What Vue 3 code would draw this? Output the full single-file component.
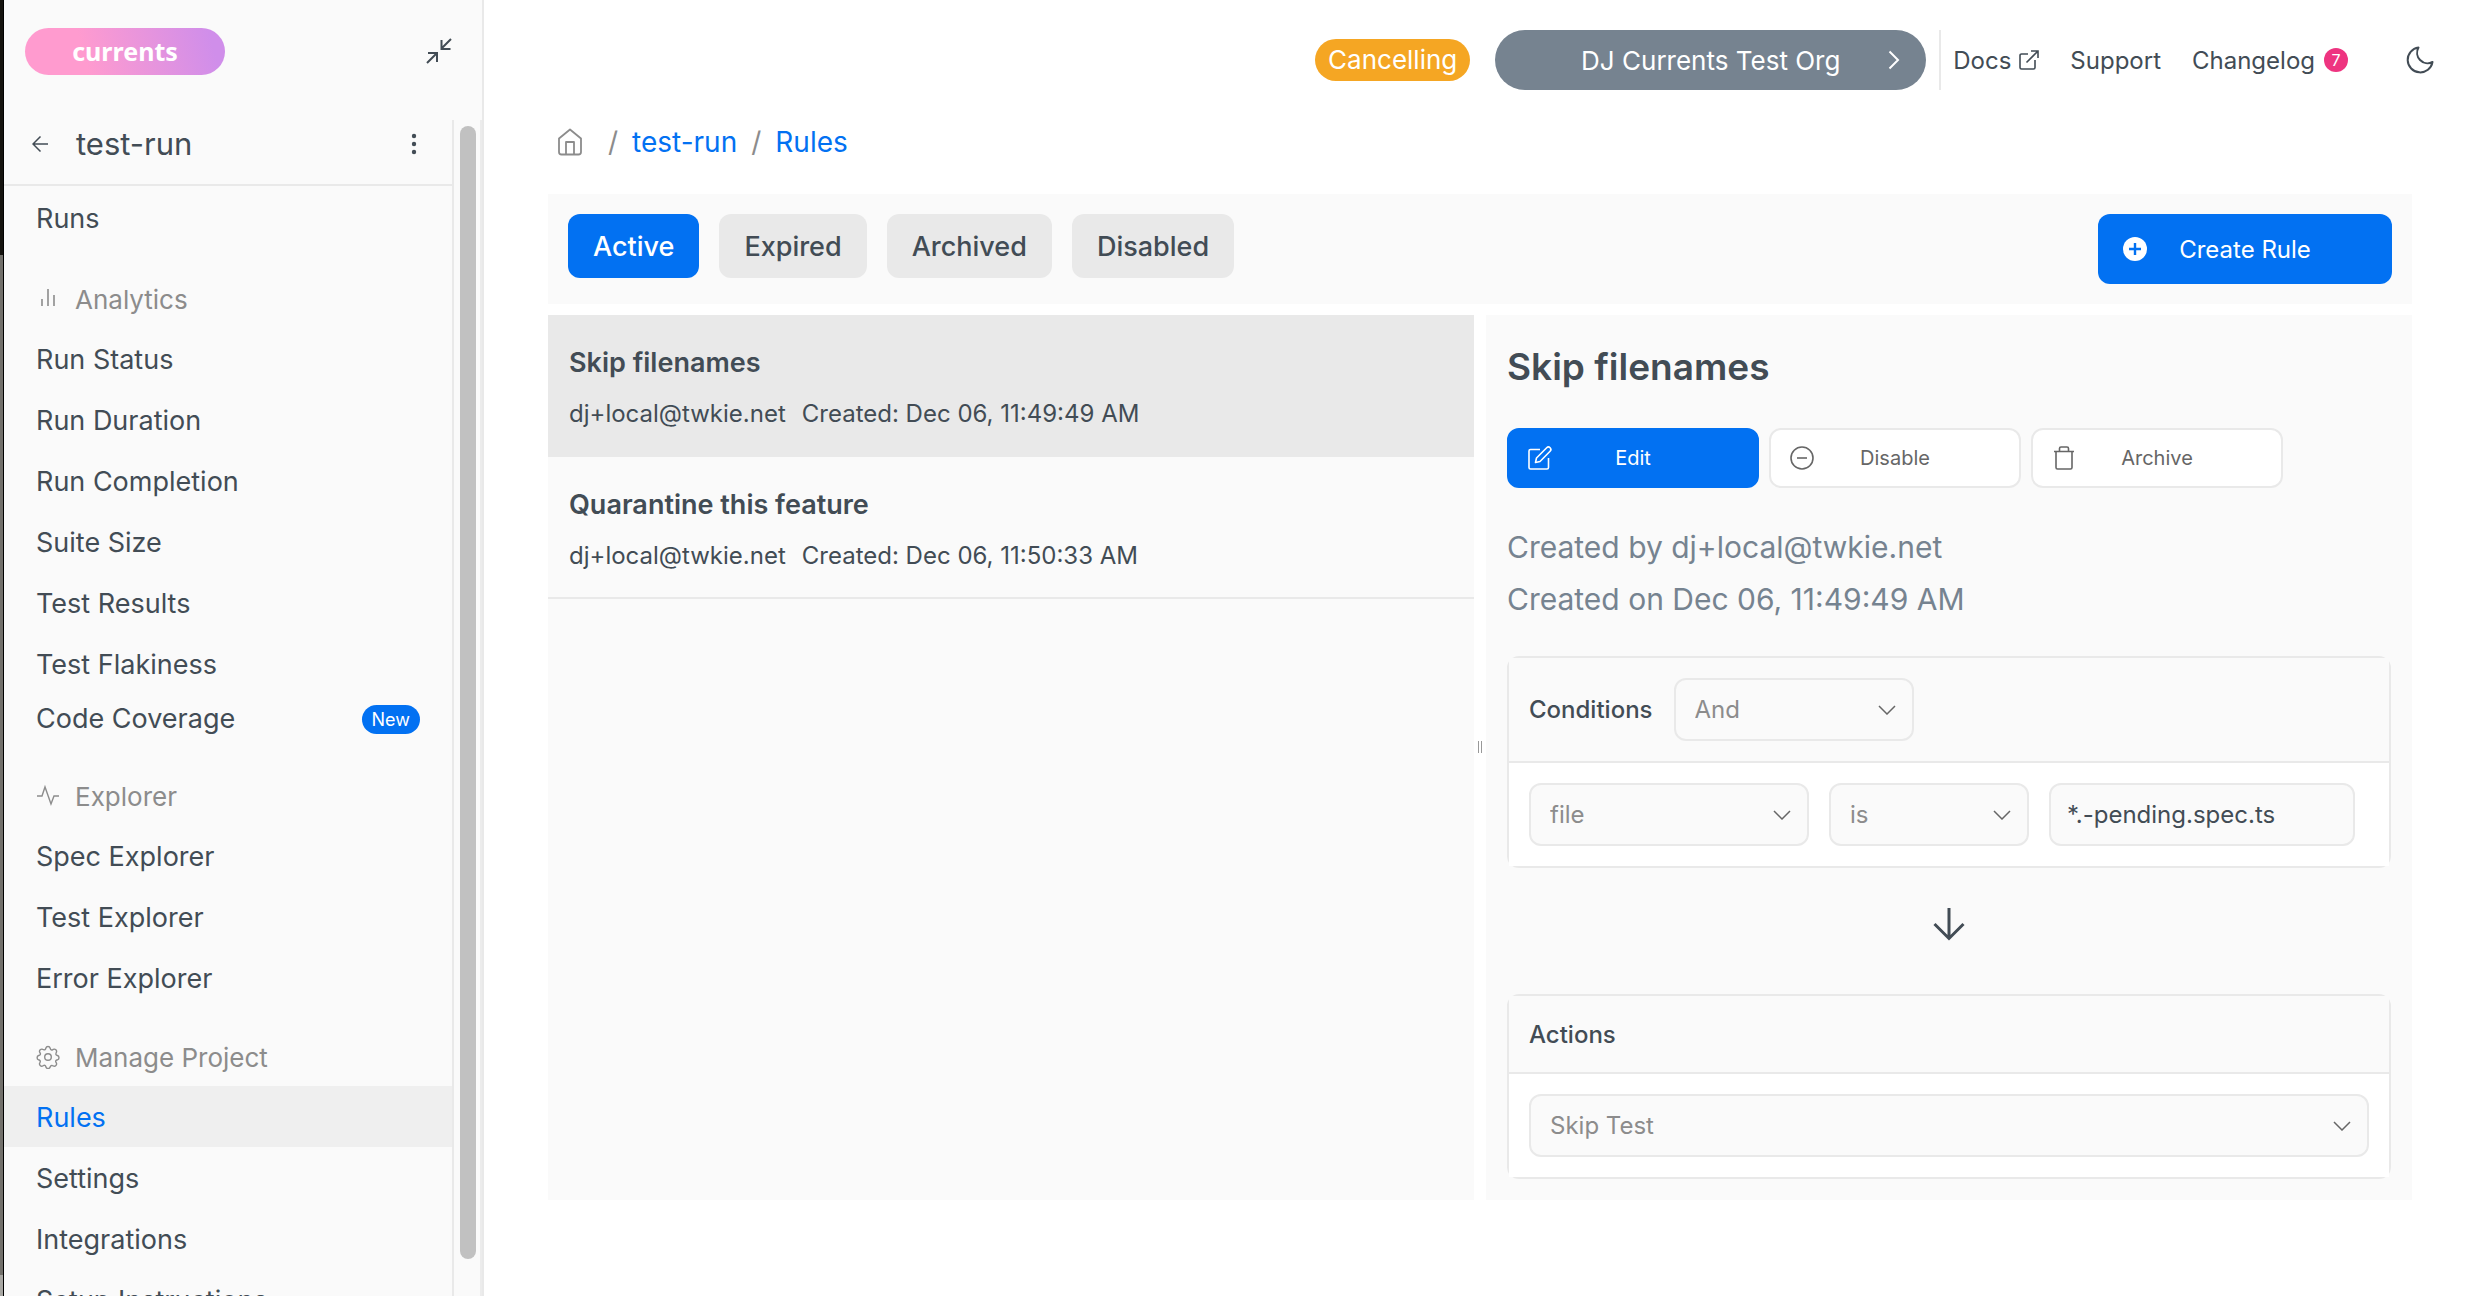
<script setup>
import { ref } from 'vue'

const sections = [
  {
    title: 'Analytics',
    icon: 'bars',
    items: [
      { label: 'Run Status' },
      { label: 'Run Duration' },
      { label: 'Run Completion' },
      { label: 'Suite Size' },
      { label: 'Test Results' },
      { label: 'Test Flakiness' },
      { label: 'Code Coverage', badge: 'New' }
    ]
  },
  {
    title: 'Explorer',
    icon: 'pulse',
    items: [{ label: 'Spec Explorer' }, { label: 'Test Explorer' }, { label: 'Error Explorer' }]
  },
  {
    title: 'Manage Project',
    icon: 'gear',
    items: [
      { label: 'Rules', current: true },
      { label: 'Settings' },
      { label: 'Integrations' },
      { label: 'Setup Instructions' }
    ]
  }
]

const tabs = ['Active', 'Expired', 'Archived', 'Disabled']
const activeTab = ref('Active')

const rules = [
  { name: 'Skip filenames', author: 'dj+local@twkie.net', created: 'Dec 06, 11:49:49 AM' },
  { name: 'Quarantine this feature', author: 'dj+local@twkie.net', created: 'Dec 06, 11:50:33 AM' }
]
const selected = ref(0)
const pattern = ref('*.-pending.spec.ts')
</script>

<template>
  <div class="app">
    <div class="edge"></div>
    <aside class="sidebar">
      <div class="brand">
        <a href="#" class="logo">currents</a>
        <button class="icon-btn" aria-label="Collapse sidebar">
          <svg width="26" height="26" viewBox="0 0 26 26" class="ink" stroke-width="2">
            <path d="M25 1 15.500 10.500M15.500 2v9h9M1 25l9.500-9.500M2 15h9v9" />
          </svg>
        </button>
      </div>
      <div class="scroller">
        <nav class="nav">
          <div class="project">
            <a href="#" class="back" aria-label="Back">
              <svg width="16" height="16" viewBox="0 0 16 16" class="ink" stroke-width="1.500">
                <path d="M16 8H1M8.500.5 1 8l7.500 7.500" />
              </svg>
            </a>
            <span class="project-name">test-run</span>
            <button class="icon-btn" aria-label="Project menu">
              <svg width="6" height="22" viewBox="0 0 6 22" fill="#424c55">
                <circle cx="3" cy="3" r="2.200" /><circle cx="3" cy="11" r="2.200" /><circle cx="3" cy="19" r="2.200" />
              </svg>
            </button>
          </div>
          <a href="#" class="item runs">Runs</a>
          <section v-for="s in sections" :key="s.title" class="group">
            <h2 class="group-title">
              <svg v-if="s.icon === 'bars'" width="24" height="24" viewBox="0 0 24 24" class="muted" stroke-width="1.600">
                <path d="M6 12v7M12 2v17M18 8v11" />
              </svg>
              <svg v-else-if="s.icon === 'pulse'" width="24" height="24" viewBox="0 0 24 24" class="muted" stroke-width="1.400">
                <path d="M1 12h5l3-9 6 17 3-8h5" />
              </svg>
              <svg v-else width="24" height="24" viewBox="0 0 24 24" class="muted" stroke-width="1.400">
                <circle cx="12" cy="12" r="3.300" />
                <path d="M9.800 3.200a2.300 2.300 0 0 1 4.400 0l.2.700a1.500 1.500 0 0 0 2.200.9l.6-.4a2.300 2.300 0 0 1 3.100 3.100l-.3.700a1.500 1.500 0 0 0 .9 2.100l.6.200a2.300 2.300 0 0 1 0 4.300l-.7.200a1.500 1.500 0 0 0-.9 2.200l.4.600a2.300 2.300 0 0 1-3.100 3.100l-.7-.3a1.500 1.500 0 0 0-2.100.9l-.2.600a2.300 2.300 0 0 1-4.300 0l-.2-.7a1.500 1.500 0 0 0-2.200-.9l-.6.400a2.300 2.300 0 0 1-3.100-3.100l.3-.7a1.500 1.500 0 0 0-.9-2.100l-.6-.2a2.300 2.300 0 0 1 0-4.300l.7-.2a1.500 1.500 0 0 0 .9-2.200l-.4-.6a2.300 2.300 0 0 1 3.100-3.100l.7.300a1.500 1.500 0 0 0 2.100-.9z" />
              </svg>
              {{ s.title }}
            </h2>
            <a
              v-for="i in s.items"
              :key="i.label"
              href="#"
              class="item"
              :class="{ current: i.current, badged: i.badge }"
            >
              {{ i.label }}
              <span v-if="i.badge" class="new">{{ i.badge }}</span>
            </a>
          </section>
        </nav>
        <div class="track"><div class="thumb"></div></div>
      </div>
    </aside>

    <main class="main">
      <header class="topbar">
        <span class="status">Cancelling</span>
        <button class="org">
          <span class="org-name">DJ Currents Test Org</span>
          <svg width="12" height="20" viewBox="0 0 12 20" fill="none" stroke="#fff" stroke-width="2">
            <path d="M1.500 1.500 10 10l-8.500 8.500" />
          </svg>
        </button>
        <div class="links">
          <a href="#" class="top-link docs">Docs
            <svg width="20" height="20" viewBox="0 0 20 20" class="ink" stroke-width="1.600">
              <path d="M9 4H2.500A1.500 1.500 0 0 0 1 5.500v12A1.500 1.500 0 0 0 2.500 19h12a1.500 1.500 0 0 0 1.500-1.500V10M7.500 12.500 19 1M12 1h7v7" />
            </svg>
          </a>
          <a href="#" class="top-link">Support</a>
          <a href="#" class="top-link log">Changelog <span class="count">7</span></a>
          <button class="icon-btn" aria-label="Dark mode">
            <svg width="28" height="28" viewBox="0 0 28 28" class="ink" stroke-width="2">
              <path d="M12.500 1.500A12.500 12.500 0 1 0 26.500 16 10.500 10.500 0 0 1 12.500 1.500z" stroke-linejoin="round" />
            </svg>
          </button>
        </div>
      </header>

      <nav class="crumbs">
        <a href="#" aria-label="Home" class="home">
          <svg width="24" height="28" viewBox="0 0 24 28" class="muted" stroke-width="1.800">
            <path d="M1 10.500 12 1.500l11 9V24a2.500 2.500 0 0 1-2.500 2.500h-17A2.500 2.500 0 0 1 1 24zM8 26V14h8v12" stroke-linejoin="round" />
          </svg>
        </a>
        <span class="slash">/</span>
        <a href="#">test-run</a>
        <span class="slash">/</span>
        <a href="#">Rules</a>
      </nav>

      <div class="toolbar">
        <button
          v-for="t in tabs"
          :key="t"
          class="tab"
          :class="{ on: t === activeTab }"
          @click="activeTab = t"
        >{{ t }}</button>
        <button class="create">
          <svg width="24" height="24" viewBox="0 0 24 24">
            <circle cx="12" cy="12" r="12" fill="#fff" />
            <path d="M12 6v12M6 12h12" stroke="#0271f2" stroke-width="2.400" />
          </svg>
          <span>Create Rule</span>
        </button>
      </div>

      <div class="split">
        <section class="panel">
          <article
            v-for="(r, i) in rules"
            :key="r.name"
            class="rule"
            :class="{ picked: i === selected }"
            @click="selected = i"
          >
            <h3>{{ r.name }}</h3>
            <p><span>{{ r.author }}</span><span>Created: {{ r.created }}</span></p>
          </article>
        </section>

        <div class="handle"><i></i><i></i></div>

        <section class="panel detail">
          <h1>{{ rules[0].name }}</h1>
          <div class="actions">
            <button class="act primary">
              <svg width="24" height="24" viewBox="0 0 24 24" fill="none" stroke="#fff" stroke-width="1.600">
                <path d="M12 3.500H2.500A1.500 1.500 0 0 0 1 5v16.500A1.500 1.500 0 0 0 2.500 23H19a1.500 1.500 0 0 0 1.500-1.500V12M8.500 12 18.700 1.800a2.400 2.400 0 0 1 3.400 3.400L12 15.500l-4.500 1z" stroke-linejoin="round" />
              </svg>
              <span>Edit</span>
            </button>
            <button class="act">
              <svg width="24" height="24" viewBox="0 0 24 24" fill="none" stroke="#666" stroke-width="1.600">
                <circle cx="12" cy="12" r="11" /><path d="M7 12h10" />
              </svg>
              <span>Disable</span>
            </button>
            <button class="act">
              <svg width="24" height="24" viewBox="0 0 24 24" fill="none" stroke="#666" stroke-width="1.600">
                <path d="M2 5.500h20M4 5.500v16A1.500 1.500 0 0 0 5.500 23h13a1.500 1.500 0 0 0 1.500-1.500v-16M7.500 5V2.500A1.500 1.500 0 0 1 9 1h6a1.500 1.500 0 0 1 1.500 1.500V5" />
              </svg>
              <span>Archive</span>
            </button>
          </div>
          <div class="meta">
            <p>Created by {{ rules[0].author }}</p>
            <p>Created on {{ rules[0].created }}</p>
          </div>

          <div class="card">
            <div class="card-head">
              <label for="operator">Conditions</label>
              <div class="select operator">
                <select id="operator"><option>And</option><option>Or</option></select>
                <svg width="18" height="10" viewBox="0 0 18 10"><path d="M1 1l8 8 8-8" /></svg>
              </div>
            </div>
            <div class="card-body">
              <div class="select field">
                <select aria-label="Field"><option>file</option><option>title</option></select>
                <svg width="18" height="10" viewBox="0 0 18 10"><path d="M1 1l8 8 8-8" /></svg>
              </div>
              <div class="select comparison">
                <select aria-label="Comparison"><option>is</option><option>is not</option></select>
                <svg width="18" height="10" viewBox="0 0 18 10"><path d="M1 1l8 8 8-8" /></svg>
              </div>
              <input v-model="pattern" class="value" type="text" aria-label="Value" />
            </div>
          </div>

          <div class="arrow">
            <svg width="32" height="34" viewBox="0 0 32 34" class="ink" stroke-width="3">
              <path d="M16 1v30M1.500 17 16 31.500 30.500 17" />
            </svg>
          </div>

          <div class="card">
            <div class="card-head short"><label for="action">Actions</label></div>
            <div class="card-body">
              <div class="select wide">
                <select id="action"><option>Skip Test</option><option>Quarantine Test</option></select>
                <svg width="18" height="10" viewBox="0 0 18 10"><path d="M1 1l8 8 8-8" /></svg>
              </div>
            </div>
          </div>
        </section>
      </div>
    </main>
  </div>
</template>

<style>
body {
  margin: 0;
  overflow: hidden;
  background: #fff;
}
</style>

<style scoped>
* {
  box-sizing: border-box;
}

.app {
  display: flex;
  height: 100vh;
  overflow: hidden;
  color: #424c55;
  font-family: Inter, "Liberation Sans", sans-serif;
  font-size: 26px;
}

a {
  color: inherit;
  text-decoration: none;
}

button,
select,
input {
  font-family: inherit;
  margin: 0;
}

button {
  border: 0;
  padding: 0;
  cursor: pointer;
}

h1,
h2,
h3,
p {
  margin: 0;
}

svg {
  display: block;
  flex: none;
}

.ink {
  fill: none;
  stroke: #424c55;
}

.muted {
  fill: none;
  stroke: #8c8c8c;
}

.icon-btn {
  background: none;
}

.edge {
  flex: none;
  width: 4px;
  border-right: 1px solid #000;
  background: linear-gradient(#15130f 0 255px, #72706b 255px 1275px, #a8a7a3 1275px);
}

.sidebar {
  flex: none;
  display: flex;
  flex-direction: column;
  width: 480px;
  border-right: 2px solid #e9e9e9;
  background: #fafafa;
}

.brand {
  flex: none;
  display: flex;
  justify-content: space-between;
  align-items: center;
  height: 120px;
  padding: 0 30px 18px 21px;
}

.logo {
  width: 200px;
  height: 47px;
  border-radius: 24px;
  background: linear-gradient(75deg, #ff9bcf 30%, #d08eea 92%);
  color: #fff;
  font: 700 25px/46px "Noto Sans", sans-serif;
  text-align: center;
}

.scroller {
  flex: 1;
  display: flex;
  min-height: 0;
}

.nav {
  flex: 1;
  overflow: hidden;
  border-right: 2px solid #e9e9e9;
}

.track {
  width: 28px;
  padding: 6px 4px 37px 6px;
  border-right: 2px solid #ececec;
}

.thumb {
  height: 100%;
  border-radius: 8px;
  background: #c1c1c1;
}

.project {
  display: flex;
  align-items: center;
  height: 66px;
  padding: 0 35px 16px 28px;
  border-bottom: 2px solid #e9e9e9;
}

.project-name {
  flex: 1;
  margin-left: 28px;
  font-size: 31px;
  line-height: 36px;
}

.item {
  display: flex;
  justify-content: space-between;
  align-items: center;
  height: 61px;
  padding: 2px 32px 0;
  font-size: 27px;
  line-height: 32px;
  white-space: nowrap;
}

.runs {
  height: 64px;
}

.item.current {
  background: #efefef;
  color: #0271f2;
}

.item.badged {
  height: 48px;
  margin-bottom: 5px;
}

.new {
  padding: 0 10px;
  border-radius: 15px;
  background: #0271f2;
  color: #fff;
  font-size: 18px;
  line-height: 29px;
}

.group-title {
  display: flex;
  align-items: center;
  gap: 15px;
  height: 78px;
  padding: 20px 32px 0;
  color: #8c8c8c;
  font-size: 26px;
  font-weight: 400;
}

.main {
  flex: 1;
  min-width: 0;
  padding: 0 58px 0 64px;
}

.topbar {
  display: flex;
  justify-content: flex-end;
  align-items: center;
  height: 120px;
  margin-right: -22px;
}

.status {
  margin-right: 25px;
  padding: 0 13px;
  border-radius: 21px;
  background: #f5a623;
  color: #fff;
  line-height: 42px;
}

.org {
  display: flex;
  align-items: center;
  width: 431px;
  height: 60px;
  margin-right: 13px;
  padding: 0 26px 0 38px;
  border-radius: 30px;
  background: #768390;
  color: #fff;
  font-size: 26px;
}

.org-name {
  flex: 1;
}

.links {
  display: flex;
  align-items: center;
  height: 60px;
  padding-left: 12px;
  border-left: 2px solid #e9e9e9;
  font-size: 24px;
}

.top-link {
  display: flex;
  align-items: center;
  margin-right: 31px;
}

.docs {
  gap: 8px;
}

.log {
  gap: 9px;
  margin-right: 58px;
}

.count {
  width: 24px;
  border-radius: 12px;
  background: #ee3480;
  color: #fff;
  font-size: 16px;
  line-height: 24px;
  text-align: center;
}

.crumbs {
  display: flex;
  align-items: center;
  gap: 14px;
  height: 44px;
  margin-bottom: 30px;
  padding-left: 10px;
  color: #0271f2;
  font-size: 28px;
}

.home {
  margin-right: 12px;
}

.slash {
  color: #8c8c8c;
}

.toolbar {
  display: flex;
  align-items: flex-start;
  gap: 20px;
  margin-bottom: 11px;
  padding: 20px;
  background: #fafafa;
}

.tab {
  height: 64px;
  padding: 0 25px;
  border-radius: 12px;
  background: #e9e9e9;
  color: #424c55;
  font-size: 27px;
  font-weight: 500;
}

.tab.on {
  background: #0271f2;
  color: #fff;
}

.create {
  display: flex;
  align-items: center;
  width: 294px;
  height: 70px;
  margin-left: auto;
  padding: 0 25px;
  border-radius: 12px;
  background: #0271f2;
  color: #fff;
  font-size: 24px;
}

.create span {
  flex: 1;
  padding-right: 24px;
}

.split {
  display: grid;
  grid-template-columns: 1fr 12px 1fr;
}

.panel {
  background: #fafafa;
}

.rule {
  height: 142px;
  padding: 31px 21px 0;
  border-bottom: 2px solid #e9e9e9;
}

.rule.picked {
  background: #e9e9e9;
}

.rule h3 {
  margin-bottom: 17px;
  font-size: 27px;
  font-weight: 600;
  line-height: 34px;
}

.rule p {
  display: flex;
  gap: 16px;
  font-size: 24px;
  line-height: 34px;
}

.handle {
  display: flex;
  justify-content: center;
  align-items: center;
  gap: 2px;
  padding-bottom: 22px;
}

.handle i {
  width: 1px;
  height: 12px;
  background: #999;
}

.detail {
  padding: 29px 21px 21px;
}

.detail h1 {
  margin-bottom: 38px;
  font-size: 37px;
  font-weight: 600;
  line-height: 46px;
}

.actions {
  display: flex;
  gap: 10px;
  margin-bottom: 33px;
}

.act {
  display: flex;
  align-items: center;
  width: 252px;
  height: 60px;
  padding: 0 19px;
  border: 2px solid #e9e9e9;
  border-radius: 12px;
  background: #fff;
  color: #666;
  font-size: 20px;
}

.act span {
  flex: 1;
  padding-right: 24px;
}

.act.primary {
  border-color: #0271f2;
  background: #0271f2;
  color: #fff;
}

.meta {
  margin-bottom: 31px;
  color: #768390;
  font-size: 30px;
  line-height: 52px;
}

.card {
  border: 2px solid #e9e9e9;
  border-radius: 12px;
}

.card-head {
  display: flex;
  align-items: center;
  gap: 21px;
  min-height: 78px;
  padding: 20px;
  border-bottom: 2px solid #e9e9e9;
  background: #fafafa;
  font-size: 24px;
  font-weight: 500;
}

.short {
  padding: 0 20px;
}

.card-body {
  display: flex;
  gap: 20px;
  padding: 20px;
  background: #fff;
}

.select {
  position: relative;
}

.select select,
.value {
  width: 100%;
  height: 63px;
  padding: 0 19px;
  border: 2px solid #e9e9e9;
  border-radius: 12px;
  background: #fafafa;
  color: #8c8c8c;
  font-size: 24px;
  appearance: none;
}

.select svg {
  position: absolute;
  right: 18px;
  top: 27px;
  fill: none;
  stroke: #666;
  stroke-width: 1.500;
  pointer-events: none;
}

.operator {
  width: 240px;
}

.field {
  width: 280px;
}

.comparison {
  width: 200px;
}

.value {
  width: 306px;
  padding: 0 16px;
  color: #424c55;
}

.wide {
  flex: 1;
}

.arrow {
  display: flex;
  justify-content: center;
  align-items: center;
  height: 126px;
  padding-bottom: 14px;
}
</style>
